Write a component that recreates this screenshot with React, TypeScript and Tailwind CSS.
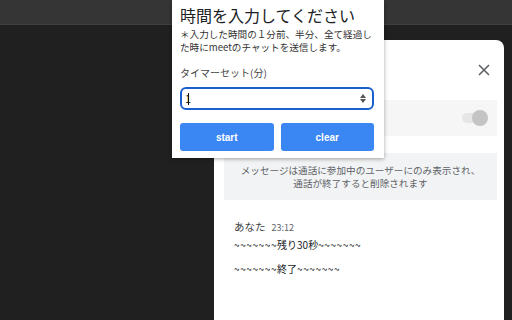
import React from "react"

const jp = { fontFamily: '"Noto Sans CJK JP", "Noto Sans", sans-serif' }

function TimerPopup() {
  return (
    <div
      className="absolute left-[172px] top-0 w-[212px] h-[158px] bg-white shadow-[0_1px_4px_rgba(0,0,0,0.35)] px-[8px] pt-[4px]"
      style={jp}
    >
      <h1 className="text-[16px] leading-[22px] text-[#202124]">時間を入力してください</h1>
      <p className="mt-[2px] text-[9.6px] leading-[12.5px] text-[#333] whitespace-nowrap">
        ＊入力した時間の１分前、半分、全て経過し
        <br />
        た時にmeetのチャットを送信します。
      </p>
      <div className="mt-[13px] text-[10px] leading-[14px] text-[#444]">タイマーセット(分)</div>
      <div className="mt-[7px] h-[23px] w-[194px] rounded-[6px] border-2 border-[#1a5fd0] flex items-center justify-between pl-[3px] pr-[6px]">
        <span className="text-[11px] text-[#111] flex items-center">
          1<span className="w-px h-[12px] bg-[#111] ml-[-3px]" />
        </span>
        <div className="flex flex-col gap-[1px]">
          <svg width="6" height="4" viewBox="0 0 6 4">
            <path d="M3 0 L6 4 L0 4 Z" fill="#555" />
          </svg>
          <svg width="6" height="4" viewBox="0 0 6 4">
            <path d="M0 0 L6 0 L3 4 Z" fill="#555" />
          </svg>
        </div>
      </div>
      <div className="mt-[13px] flex gap-[7px] w-[194px]">
        <button className="h-[28px] flex-1 rounded-[3px] bg-[#3a86f2] text-white text-[10px] font-bold" style={{ fontFamily: '"Liberation Sans", sans-serif' }}>
          start
        </button>
        <button className="h-[28px] flex-1 rounded-[3px] bg-[#3a86f2] text-white text-[10px] font-bold" style={{ fontFamily: '"Liberation Sans", sans-serif' }}>
          clear
        </button>
      </div>
    </div>
  )
}

function Tildes() {
  return <span className="tracking-[0.6px]">~~~~~~~</span>
}

function ChatPanel() {
  return (
    <div className="w-[290px] h-[280px] mt-[15px] mr-[8px] bg-white rounded-t-[8px] flex flex-col" style={jp}>
      <div className="h-[60px] flex justify-end items-center pr-[14px]">
        <svg width="12" height="12" viewBox="0 0 12 12">
          <path d="M1 1 L11 11 M11 1 L1 11" stroke="#5f6368" strokeWidth="1.6" />
        </svg>
      </div>
      <div className="h-[36px] mx-[10px] mr-[7px] bg-[#f6f6f6] flex items-center justify-end pr-[9px]">
        <div className="relative w-[26px] h-[12px] flex items-center">
          <div className="w-[22px] h-[10px] rounded-full bg-[#e6e6e6]" />
          <div className="absolute right-0 w-[16px] h-[16px] rounded-full bg-[#c4c4c4]" />
        </div>
      </div>
      <div className="mt-[17px] mx-[10px] mr-[7px] h-[47px] bg-[#f1f3f4] flex flex-col items-center justify-center gap-[1px] text-[9.6px] leading-[12.5px] text-[#5f6368]">
        <span>メッセージは通話に参加中のユーザーにのみ表示され、</span>
        <span>通話が終了すると削除されます</span>
      </div>
      <div className="mt-[19px] pl-[20px]">
        <div className="flex items-baseline gap-[6px]">
          <span className="text-[10.5px] text-[#3c4043]">あなた</span>
          <span className="text-[9px] text-[#5f6368]">23:12</span>
        </div>
        <div className="mt-[3px] text-[10px] leading-[14px] text-[#202124]">
          <Tildes />残り30秒<Tildes />
        </div>
        <div className="mt-[10px] text-[10px] leading-[14px] text-[#202124]">
          <Tildes />終了<Tildes />
        </div>
      </div>
    </div>
  )
}

export default function App() {
  return (
    <div className="relative w-[512px] h-[320px] overflow-hidden bg-[#202020]">
      <div className="h-[25px] bg-[#353535] border-b border-[#404040]" />
      <div className="flex justify-end">
        <ChatPanel />
      </div>
      <TimerPopup />
    </div>
  )
}
